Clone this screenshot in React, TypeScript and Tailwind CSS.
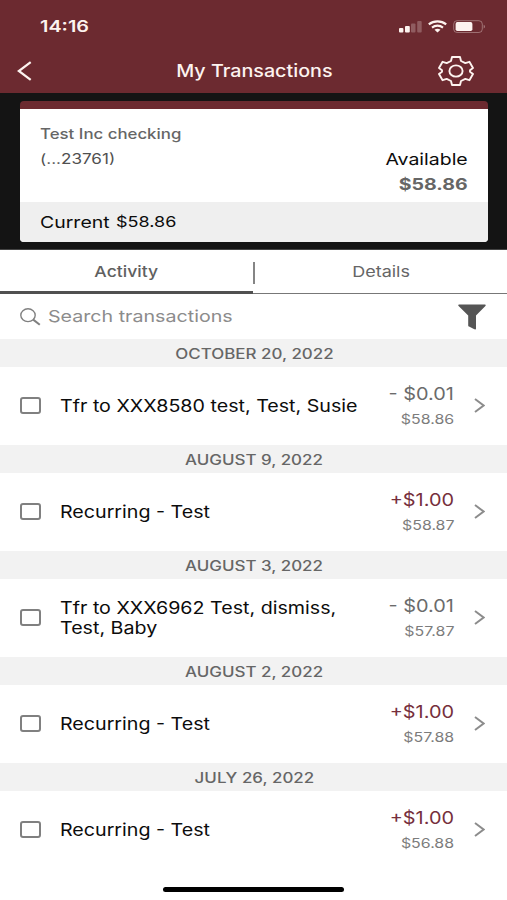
import { useState } from "react";

type Transaction = {
  id: number;
  date: string;
  description: string[];
  amount: string;
  credit?: boolean;
  balance: string;
};

const transactions: Transaction[] = [
  {
    id: 1,
    date: "OCTOBER 20, 2022",
    description: ["Tfr to XXX8580 test, Test, Susie"],
    amount: "- $0.01",
    balance: "$58.86",
  },
  {
    id: 2,
    date: "AUGUST 9, 2022",
    description: ["Recurring - Test"],
    amount: "+$1.00",
    credit: true,
    balance: "$58.87",
  },
  {
    id: 3,
    date: "AUGUST 3, 2022",
    description: ["Tfr to XXX6962 Test, dismiss,", "Test, Baby"],
    amount: "- $0.01",
    balance: "$57.87",
  },
  {
    id: 4,
    date: "AUGUST 2, 2022",
    description: ["Recurring - Test"],
    amount: "+$1.00",
    credit: true,
    balance: "$57.88",
  },
  {
    id: 5,
    date: "JULY 26, 2022",
    description: ["Recurring - Test"],
    amount: "+$1.00",
    credit: true,
    balance: "$56.88",
  },
];

function StatusBar() {
  return (
    <div className="flex h-[50px] items-center justify-between pt-0.5 pr-[21px] pl-[39.5px]">
      <span className="inline-block origin-left scale-x-[1.24] text-[16px] font-semibold">14:16</span>
      <div className="flex items-center gap-1.5">
        <svg className="h-[13px] w-[23px]" viewBox="0 0 23 13" fill="currentColor">
          <rect x="0" y="8" width="4.4" height="4.5" rx="1" />
          <rect x="6" y="6" width="4.8" height="6.5" rx="1" />
          <rect x="12" y="3.5" width="4.5" height="9" rx="1" opacity="0.25" />
          <rect x="18.2" y="1" width="4.5" height="11.5" rx="1" opacity="0.25" />
        </svg>
        <svg className="h-[13px] w-[19px]" viewBox="0 0 19 13" fill="none" stroke="currentColor" strokeWidth="2.1">
          <path d="M.8 4.4C5.8.3 13.2.3 18.2 4.4" />
          <path d="M4 7.6c3.2-2.6 7.8-2.6 11 0" />
          <path d="M6.5 9.8c1.8-1.3 4.2-1.3 6 0l-3 2.7z" fill="currentColor" stroke="none" />
        </svg>
        <svg className="h-[13px] w-[33px]" viewBox="0 0 33 13" fill="none">
          <rect x="0.7" y="0.7" width="28.6" height="11.8" rx="3.4" stroke="currentColor" strokeOpacity="0.35" />
          <rect x="2.6" y="2.1" width="16.8" height="9" rx="1.8" fill="currentColor" />
          <path d="M30.7 4.8c1.7.5 1.7 3.1 0 3.6z" fill="currentColor" fillOpacity="0.4" />
        </svg>
      </div>
    </div>
  );
}

function Header() {
  return (
    <header className="h-[93px] bg-[#6c2a30] text-[#fdf3ef]">
      <StatusBar />
      <div className="grid h-[43px] grid-cols-[60px_1fr_60px] items-center">
        <button className="pl-[17px]">
          <svg className="mb-0.5 h-5 w-[15px]" viewBox="0 0 15 20" fill="none" stroke="currentColor" strokeWidth="2.3">
            <path d="M13.7 1.2L1.8 10l11.9 8.8" />
          </svg>
        </button>
        <h1 className="pt-px pl-0.5 text-center">
          <span className="inline-block scale-x-[1.16] text-[17px] font-medium">My Transactions</span>
        </h1>
        <button className="-ml-[9px]">
          <svg
            className="mb-0.5 h-[30px] w-9"
            viewBox="0 0 36 30"
            fill="none"
            stroke="currentColor"
            strokeWidth="1.9"
            strokeLinejoin="round"
          >
            <path d="M14 1h8l1 4 4.3 2.1L31.4 5.8 35 11.9 32 14.2v1.6l3 2.3-3.6 6.1-4.1-1.3L23 25l-1 4h-8l-1-4-4.3-2.1-4.1 1.3L1 18.1l3-2.3v-1.6l-3-2.3 3.6-6.1 4.1 1.3L13 5z" />
            <ellipse cx="18" cy="15" rx="6.6" ry="5.6" />
          </svg>
        </button>
      </div>
    </header>
  );
}

function AccountCard() {
  return (
    <section className="h-[157px] border-b border-[#444] bg-[#141414] pt-2 pr-[19px] pl-5">
      <div className="h-[141px] overflow-hidden rounded-[4px] border-t-8 border-[#6c2a30] bg-white">
        <div className="flex h-[93px] justify-between px-5 pt-3 text-[#666]">
          <div className="flex flex-col">
            <span className="origin-left scale-x-[1.16] text-[14.5px] leading-[25px] font-medium">
              Test Inc checking
            </span>
            <span className="origin-left scale-x-[1.22] text-[14px] leading-[25px] text-[#505050]">(...23761)</span>
          </div>
          <div className="flex flex-col items-end pt-[25px]">
            <span className="origin-right scale-x-[1.18] text-[16.5px] leading-[26px] text-[#0c0c0c]">Available</span>
            <span className="origin-right scale-x-[1.26] text-[15.5px] leading-[26px] font-bold">$58.86</span>
          </div>
        </div>
        <div className="flex h-10 items-center gap-[17px] bg-[#efefef] px-5 text-[#0c0c0c]">
          <span className="origin-left scale-x-[1.18] text-[16.5px]">Current</span>
          <span className="origin-left scale-x-[1.2] text-[15px]">$58.86</span>
        </div>
      </div>
    </section>
  );
}

function Tabs() {
  const [tab, setTab] = useState("activity");

  return (
    <div className="flex h-11 text-[15px]">
      <button
        onClick={() => setTab("activity")}
        className={`flex w-[253px] items-center justify-center ${
          tab === "activity" ? "border-b-3 border-[#505050] font-medium" : "border-b border-[#777]"
        } pt-[3px] text-[#606060]`}
      >
        <span className="scale-x-[1.17]">Activity</span>
      </button>
      <button
        onClick={() => setTab("details")}
        className={`flex flex-1 items-center ${
          tab === "details" ? "border-b-3 border-[#505050] font-medium" : "border-b border-[#777]"
        } pt-0.5 text-[#666]`}
      >
        <span className="h-[22px] w-0.5 bg-[#858585]" />
        <span className="flex-1">
          <span className="inline-block scale-x-[1.2]">Details</span>
        </span>
      </button>
    </div>
  );
}

function SearchBar() {
  return (
    <div className="flex h-[45px] items-center pr-[21px] pl-5">
      <svg className="h-[18px] w-[21px] text-[#808080]" viewBox="0 0 21 18" fill="none" stroke="currentColor">
        <ellipse cx="8" cy="7.2" rx="7.2" ry="6.4" strokeWidth="1.4" />
        <path d="M13.2 11.6l6.6 5.2" strokeWidth="2" />
      </svg>
      <span className="ml-[7px] flex-1">
        <span className="inline-block origin-left scale-x-[1.19] text-[16.5px] text-[#8c8c8c]">
          Search transactions
        </span>
      </span>
      <svg className="h-[26px] w-7" viewBox="0 0 28 26" fill="#555">
        <path d="M1 .5h26c.8 0 1 .9.4 1.5L18 11.5v13c0 .8-.8 1.2-1.6.8L11 22.6c-.6-.3-.8-.7-.8-1.2v-9.9L.6 2C0 1.4.2.5 1 .5z" />
      </svg>
    </div>
  );
}

function TransactionRow({ transaction }: { transaction: Transaction }) {
  const { date, description, amount, credit, balance } = transaction;

  return (
    <li>
      <h2 className="flex h-7 items-center justify-center bg-[#f2f2f2] pl-px text-[#666]">
        <span className="scale-x-[1.21] text-[14px] font-medium">{date}</span>
      </h2>
      <div className="flex h-[78px] items-center pr-[22px] pl-5">
        <span className="mb-px h-[17px] w-[21px] shrink-0 rounded-[3px] border-2 border-[#808080]" />
        <div className="ml-[19px] flex flex-1 flex-col items-start">
          {description.map((line) => (
            <span
              key={line}
              className="origin-left scale-x-[1.156] text-[17px] leading-5 whitespace-nowrap text-[#0c0c0c]"
            >
              {line}
            </span>
          ))}
        </div>
        <div className="flex flex-col items-end pt-0.5">
          <span
            className={`origin-right scale-x-[1.17] text-[17px] leading-[25px] ${
              credit ? "text-[#762f3c]" : "text-[#6b6b6b]"
            }`}
          >
            {amount}
          </span>
          <span className="origin-right scale-x-[1.18] text-[13.5px] leading-[25px] text-[#7c7c7c]">{balance}</span>
        </div>
        <svg className="mb-px ml-5 h-[15px] w-[11px]" viewBox="0 0 11 15" fill="none" stroke="#8c8c8c" strokeWidth="2">
          <path d="M1 1l8.6 6.5L1 14" />
        </svg>
      </div>
    </li>
  );
}

export default function App() {
  return (
    <div className="flex h-[900px] w-full flex-col overflow-hidden bg-white font-['Inter',sans-serif]">
      <Header />
      <AccountCard />
      <Tabs />
      <SearchBar />
      <ul>
        {transactions.map((transaction) => (
          <TransactionRow key={transaction.id} transaction={transaction} />
        ))}
      </ul>
      {/* home indicator */}
      <div className="mt-auto mb-2 flex justify-center">
        <div className="h-[5px] w-[181px] rounded-full bg-black" />
      </div>
    </div>
  );
}
